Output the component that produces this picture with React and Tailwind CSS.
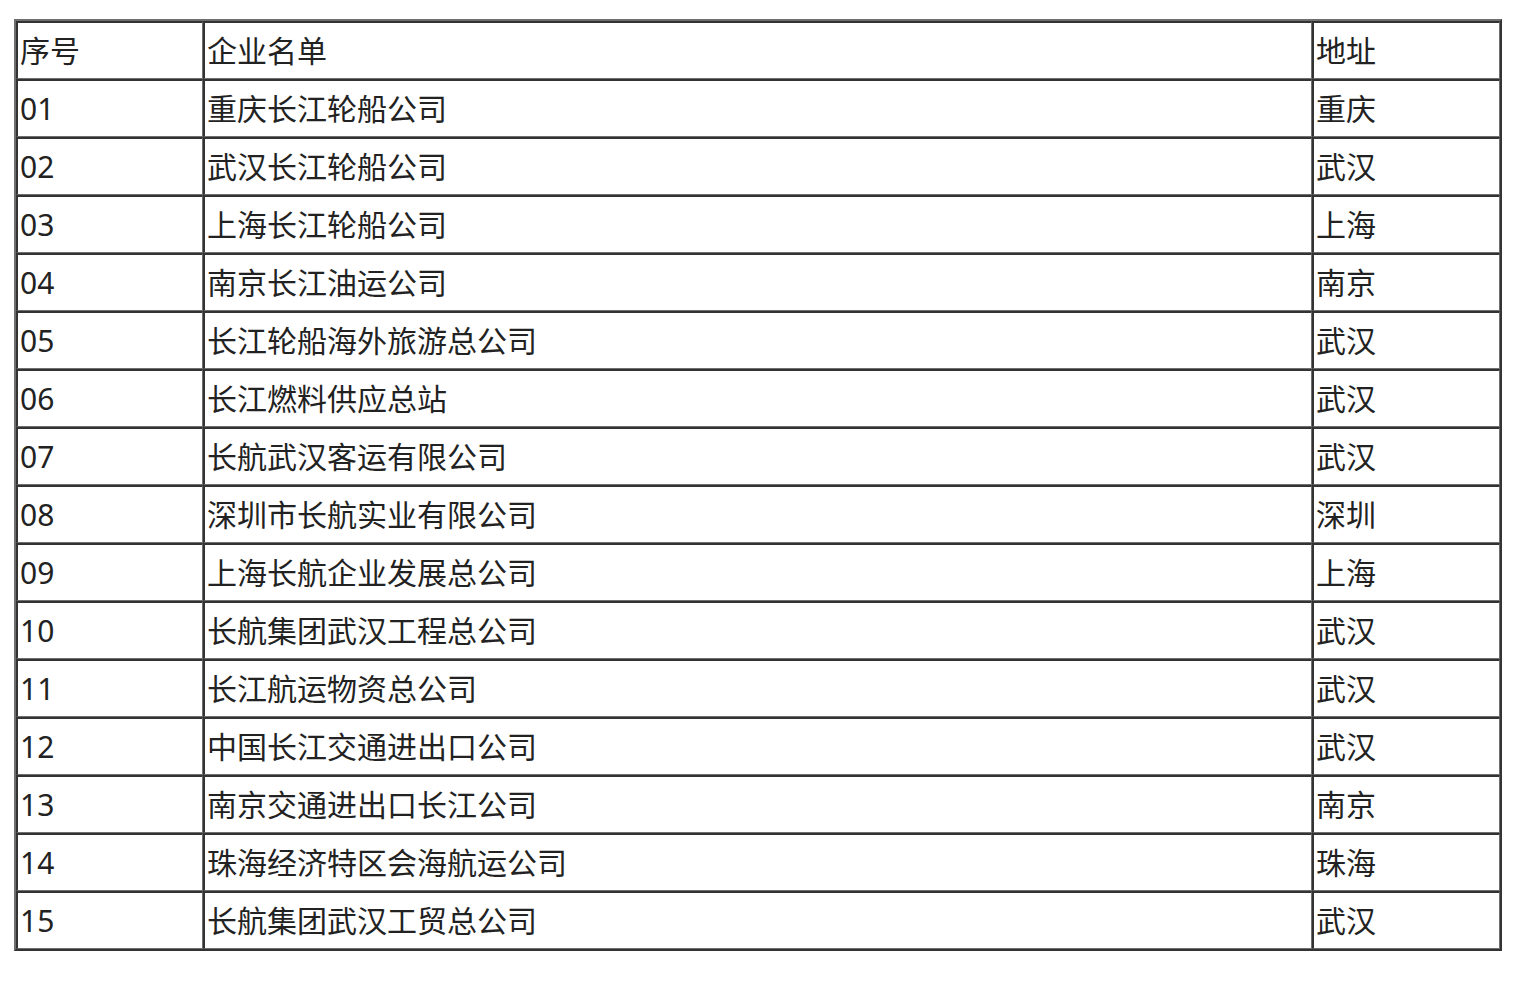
import React from 'react';

const rows = [
  ['01', '重庆长江轮船公司', '重庆'],
  ['02', '武汉长江轮船公司', '武汉'],
  ['03', '上海长江轮船公司', '上海'],
  ['04', '南京长江油运公司', '南京'],
  ['05', '长江轮船海外旅游总公司', '武汉'],
  ['06', '长江燃料供应总站', '武汉'],
  ['07', '长航武汉客运有限公司', '武汉'],
  ['08', '深圳市长航实业有限公司', '深圳'],
  ['09', '上海长航企业发展总公司', '上海'],
  ['10', '长航集团武汉工程总公司', '武汉'],
  ['11', '长江航运物资总公司', '武汉'],
  ['12', '中国长江交通进出口公司', '武汉'],
  ['13', '南京交通进出口长江公司', '南京'],
  ['14', '珠海经济特区会海航运公司', '珠海'],
  ['15', '长航集团武汉工贸总公司', '武汉'],
];

// inset cell border: dark top/left, grey bottom/right
const cell =
  'h-[58px] border-t-2 border-l-2 border-r border-b border-t-[#333] border-l-[#333] border-r-[#6f6f6f] border-b-[#6f6f6f] pl-[2px] pt-[1px] text-left align-middle font-normal';

export default function App() {
  return (
    <div className="min-h-screen bg-white pt-[19px] pl-[14px]">
      <table
        className="w-[1488px] table-fixed border-separate border-spacing-0 border-2 border-t-[#6f6f6f] border-l-[#6f6f6f] border-r-[#333] border-b-[#333] text-[30px] leading-[40px] text-[#222]"
        style={{ fontFamily: '"Noto Sans", "Noto Sans CJK SC", sans-serif' }}
      >
        <colgroup>
          <col className="w-[187px]" />
          <col className="w-[1109px]" />
          <col className="w-[188px]" />
        </colgroup>
        <thead>
          <tr>
            <th className={cell}>序号</th>
            <th className={cell}>企业名单</th>
            <th className={cell}>地址</th>
          </tr>
        </thead>
        <tbody>
          {rows.map((r) => (
            <tr key={r[0]}>
              <td className={cell}>{r[0]}</td>
              <td className={cell}>{r[1]}</td>
              <td className={cell}>{r[2]}</td>
            </tr>
          ))}
        </tbody>
      </table>
    </div>
  );
}
